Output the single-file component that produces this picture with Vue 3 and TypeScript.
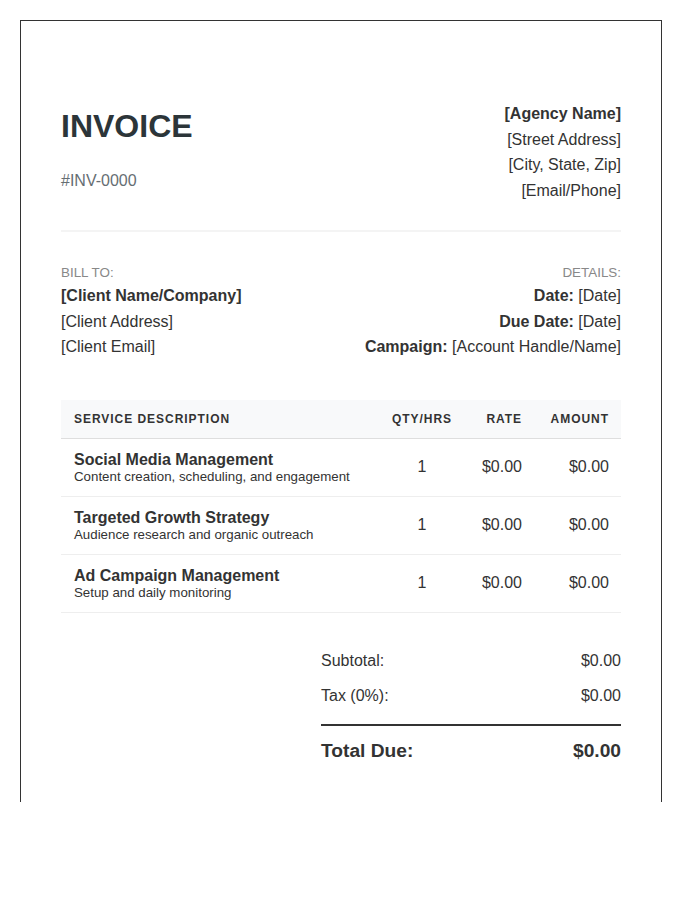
<script setup lang="ts">
interface Service {
  name: string
  desc: string
  qty: number
  rate: string
  amount: string
}

const services: Service[] = [
  { name: 'Social Media Management', desc: 'Content creation, scheduling, and engagement', qty: 1, rate: '$0.00', amount: '$0.00' },
  { name: 'Targeted Growth Strategy', desc: 'Audience research and organic outreach', qty: 1, rate: '$0.00', amount: '$0.00' },
  { name: 'Ad Campaign Management', desc: 'Setup and daily monitoring', qty: 1, rate: '$0.00', amount: '$0.00' },
]
</script>

<template>
  <div class="invoice">
    <header class="invoice-head">
      <div>
        <h1 class="invoice-title">INVOICE</h1>
        <p class="invoice-number">#INV-0000</p>
      </div>
      <div class="text-right">
        <strong>[Agency Name]</strong><br />
        [Street Address]<br />
        [City, State, Zip]<br />
        [Email/Phone]
      </div>
    </header>

    <section class="parties">
      <div>
        <div class="label">BILL TO:</div>
        <strong>[Client Name/Company]</strong><br />
        [Client Address]<br />
        [Client Email]
      </div>
      <div class="text-right">
        <div class="label">DETAILS:</div>
        <strong>Date:</strong> [Date]<br />
        <strong>Due Date:</strong> [Date]<br />
        <strong>Campaign:</strong> [Account Handle/Name]
      </div>
    </section>

    <table class="items">
      <thead>
        <tr>
          <th class="col-desc">SERVICE DESCRIPTION</th>
          <th class="col-qty">QTY/HRS</th>
          <th class="col-rate">RATE</th>
          <th class="col-amount">AMOUNT</th>
        </tr>
      </thead>
      <tbody>
        <tr v-for="item in services" :key="item.name">
          <td class="col-desc">
            <div class="item-name">{{ item.name }}</div>
            <div class="item-desc">{{ item.desc }}</div>
          </td>
          <td class="col-qty">{{ item.qty }}</td>
          <td class="col-rate">{{ item.rate }}</td>
          <td class="col-amount">{{ item.amount }}</td>
        </tr>
      </tbody>
    </table>

    <div class="totals">
      <div class="totals-row"><span>Subtotal:</span><span>$0.00</span></div>
      <div class="totals-row"><span>Tax (0%):</span><span>$0.00</span></div>
      <div class="totals-row totals-row--due"><span>Total Due:</span><span>$0.00</span></div>
    </div>
  </div>
</template>

<style>
body {
  margin: 0;
  background: #ffffff;
}
</style>

<style scoped>
.invoice {
  box-sizing: border-box;
  width: 642px;
  height: 782px;
  margin: 20px 0 0 20px;
  padding: 80px 40px 0;
  border: 1px solid #333333;
  border-bottom: none;
  font-family: "Liberation Sans", Arial, sans-serif;
  font-size: 16px;
  line-height: 25.6px;
  color: #333333;
}

.invoice-head {
  display: flex;
  justify-content: space-between;
  padding-bottom: 27px;
  border-bottom: 2px solid #f4f4f4;
}

.invoice-title {
  margin: 5px 0 0;
  font-size: 32px;
  line-height: 40px;
  font-weight: 700;
  color: #2c3539;
}

.invoice-number {
  margin: 22px 0 0;
  color: #666e73;
}

.text-right {
  text-align: right;
}

.parties {
  display: flex;
  justify-content: space-between;
  margin-top: 30.7px;
}

.label {
  font-size: 13.4px;
  line-height: 20px;
  color: #888888;
}

.items {
  width: 560px;
  margin-top: 40px;
  border-collapse: collapse;
  table-layout: fixed;
}

.items th,
.items td {
  box-sizing: border-box;
}

.items th {
  height: 39px;
  padding: 2px 12px 0;
  background: #f8f9fa;
  border-bottom: 1px solid #dedede;
  font-size: 12px;
  font-weight: 700;
  letter-spacing: 0.96px;
  text-align: right;
}

.items td {
  height: 58px;
  padding: 0 12px 2px;
  border-bottom: 1px solid #eeeeee;
  text-align: right;
}

.items .col-desc {
  width: 318px;
  padding-left: 13px;
  text-align: left;
}

.items td.col-desc {
  padding-bottom: 0;
}

.items .col-qty {
  width: 86px;
  text-align: center;
}

.items .col-rate {
  width: 69px;
}

.items .col-amount {
  width: 87px;
}

.item-name {
  font-size: 16px;
  line-height: 18px;
  font-weight: 700;
}

.item-desc {
  font-size: 13.3px;
  line-height: 16px;
}

.totals {
  width: 300px;
  margin: 30px 0 0 auto;
}

.totals-row {
  display: flex;
  justify-content: space-between;
  height: 35px;
  align-items: center;
}

.totals-row--due {
  height: 48px;
  margin-top: 11px;
  border-top: 2px solid #333333;
  font-size: 19.2px;
  font-weight: 700;
}
</style>
